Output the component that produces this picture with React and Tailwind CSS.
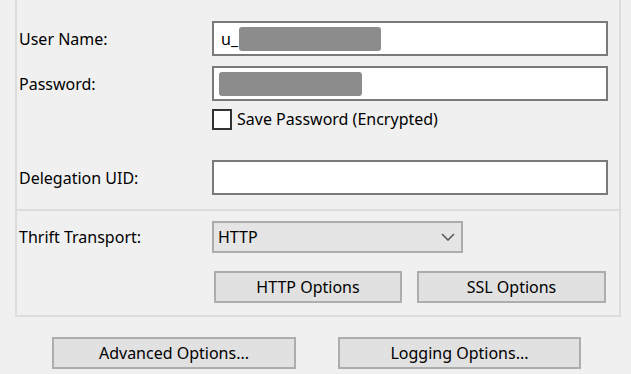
import React from "react";

const font = { fontFamily: '"Noto Sans", "Open Sans", sans-serif' };

function TextBox({ children }) {
  return (
    <div className="relative w-[396px] h-[35px] bg-white border-2 border-[#7a7a7a] flex items-center">
      {children}
    </div>
  );
}

function Button({ label, className }) {
  return (
    <button
      className={
        "h-[32px] bg-[#e1e1e1] border-2 border-[#adadad] text-[16px] text-black flex items-center justify-center " +
        className
      }
    >
      {label}
    </button>
  );
}

function Row({ label, children, className = "" }) {
  return (
    <div className={"flex items-center " + className}>
      <div className="w-[195px] text-[16px] text-black pl-[2px]">{label}</div>
      {children}
    </div>
  );
}

export default function App() {
  return (
    <div
      className="w-[631px] h-[374px] bg-[#f0f0f0] overflow-hidden"
      style={font}
    >
      {/* Credentials group */}
      <div className="ml-[15px] w-[606px] h-[211px] border-x-2 border-b-2 border-[#dcdcdc] pt-[21px]">
        <Row label="User Name:">
          <TextBox>
            <span className="ml-[7px] text-[16px] text-black leading-none">u_</span>
            <span className="ml-[1px] w-[142px] h-[24px] rounded-[3px] bg-[#8c8c8c]" />
          </TextBox>
        </Row>
        <Row label="Password:" className="mt-[10px]">
          <TextBox>
            <span className="ml-[5px] w-[143px] h-[24px] rounded-[3px] bg-[#8c8c8c]" />
          </TextBox>
        </Row>
        <div className="flex items-center mt-[6px] ml-[195px]">
          <span className="w-[20px] h-[21px] bg-white border-2 border-[#333333]" />
          <span className="ml-[5px] text-[16px] text-black">
            Save Password (Encrypted)
          </span>
        </div>
        <Row label="Delegation UID:" className="mt-[29px]">
          <TextBox />
        </Row>
      </div>

      {/* Transport group */}
      <div className="ml-[15px] w-[606px] h-[106px] border-x-2 border-b-2 border-[#dcdcdc] pt-[10px]">
        <Row label="Thrift Transport:">
          <div className="w-[251px] h-[32px] bg-[#e5e5e5] border-2 border-[#acacac] flex items-center justify-between pl-[4px] pr-[6px]">
            <span className="text-[16px] text-black">HTTP</span>
            <svg width="14" height="8" viewBox="0 0 14 8">
              <path
                d="M1 1 L7 7 L13 1"
                fill="none"
                stroke="#5a5a5a"
                strokeWidth="1.6"
              />
            </svg>
          </div>
        </Row>
        <div className="flex mt-[18px] ml-[197px] gap-[15px]">
          <Button label="HTTP Options" className="w-[188px]" />
          <Button label="SSL Options" className="w-[189px]" />
        </div>
      </div>

      {/* Bottom buttons */}
      <div className="flex mt-[20px] ml-[52px] gap-[42px]">
        <Button label="Advanced Options..." className="w-[244px]" />
        <Button label="Logging Options..." className="w-[243px]" />
      </div>
    </div>
  );
}
